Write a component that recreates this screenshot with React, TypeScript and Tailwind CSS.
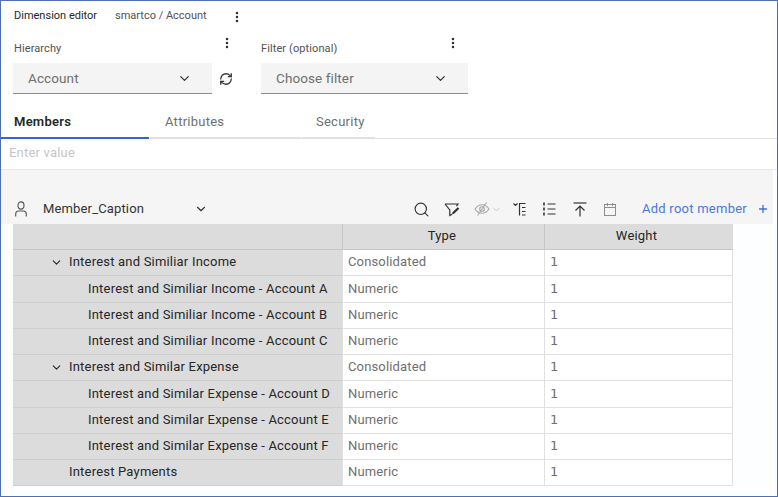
import { ChevronDown, RefreshCw, Search, Plus, MoreVertical } from "lucide-react";

const rows = [
  { name: "Interest and Similiar Income", level: 1, chev: true, type: "Consolidated" },
  { name: "Interest and Similiar Income - Account A", level: 2, type: "Numeric" },
  { name: "Interest and Similiar Income - Account B", level: 2, type: "Numeric" },
  { name: "Interest and Similiar Income - Account C", level: 2, type: "Numeric" },
  { name: "Interest and Similar Expense", level: 1, chev: true, type: "Consolidated" },
  { name: "Interest and Similar Expense - Account D", level: 2, type: "Numeric" },
  { name: "Interest and Similar Expense - Account E", level: 2, type: "Numeric" },
  { name: "Interest and Similar Expense - Account F", level: 2, type: "Numeric" },
  { name: "Interest Payments", level: 1, type: "Numeric" },
];

function Dots() {
  return <MoreVertical size={14} strokeWidth={2.4} className="text-[#333]" />;
}

function Select({ label, width }: { label: string; width: string }) {
  return (
    <div className={`${width} h-[31px] bg-[#f4f4f4] border-b border-[#8d8d8d] flex items-center justify-between pl-[15px] pr-[20px]`}>
      <span className="text-[13.5px] tracking-[0.1px] text-[#6f6f6f]">{label}</span>
      <ChevronDown size={15} className="text-[#333]" />
    </div>
  );
}

function UserIcon() {
  return (
    <svg width="12" height="16" viewBox="0 0 12 16" fill="none" stroke="#525252" strokeWidth="1.1">
      <ellipse cx="6" cy="4.500" rx="3" ry="3.600" />
      <path d="M0.700 15.500v-2.500c0-1.800 1.200-3 3-3h4.600c1.800 0 3 1.200 3 3v2.500" />
    </svg>
  );
}

function FilterEdit() {
  return (
    <svg width="16" height="15" viewBox="0 0 16 15" fill="none" stroke="#333" strokeWidth="1.2">
      <path d="M1 2h13l-1.500 2.200M1 2l4.800 6v5.500l2.400-1.200" />
      <path d="M8.500 10.200l5.200-5 1.600 1.500-5.200 5-2 .5z" fill="#333" stroke="none" />
    </svg>
  );
}

function EyeCrossed() {
  return (
    <svg width="16" height="16" viewBox="0 0 16 16" fill="none" stroke="#a8a8a8" strokeWidth="1.1">
      <path d="M1 8c2-3 4.300-4.300 7-4.300S13 5 15 8c-2 3-4.300 4.300-7 4.300S3 11 1 8z" />
      <circle cx="8" cy="8" r="2.300" />
      <path d="M12.500 1.500L3.500 14.500" />
    </svg>
  );
}

function TreeIcon() {
  return (
    <svg width="14" height="14" viewBox="0 0 14 14" fill="none" stroke="#333" strokeWidth="1.2">
      <path d="M0.500 1.500L2.500 3.500L4.500 1.500" />
      <path d="M6.500 1v12.500" />
      <path d="M6.500 1.500h6M9 5.500h3.500M9 9.500h3.500M9 13h3.500" />
    </svg>
  );
}

function ListIcon() {
  return (
    <svg width="13" height="14" viewBox="0 0 13 14" fill="none" stroke="#333" strokeWidth="1.2">
      <path d="M1 0.500v3M1 5.500v3M1 10.500v3" strokeWidth="1.600" />
      <path d="M4.500 2h8M4.500 7h8M4.500 12h8" />
    </svg>
  );
}

function TopArrow() {
  return (
    <svg width="14" height="15" viewBox="0 0 14 15" fill="none" stroke="#333" strokeWidth="1.2">
      <path d="M0.500 1h13" />
      <path d="M7 14.500V4M2.500 8.500L7 4l4.500 4.500" />
    </svg>
  );
}

function CalendarIcon() {
  return (
    <svg width="12" height="13" viewBox="0 0 12 13" fill="none" stroke="#8d8d8d" strokeWidth="1">
      <rect x="0.500" y="1.500" width="11" height="11" />
      <path d="M0.500 4.500h11M3.500 0v3M8.500 0v3" />
    </svg>
  );
}

export default function App() {
  return (
    <div className="w-[778px] h-[497px] overflow-hidden bg-white border border-[#4f70b0] flex flex-col font-['Roboto',sans-serif]">
      <div className="flex items-center h-[30px] pl-[13px] pt-[1px] text-[11px]">
        <span className="text-[#262626] w-[101px]">Dimension editor</span>
        <span className="text-[#525252] w-[115px]">smartco / Account</span>
        <Dots />
      </div>
      <div className="flex pl-[12px] h-[65px]">
        <div className="flex flex-col w-[248px]">
          <div className="flex justify-between h-[32px] pr-[27px] pl-[1px]">
            <span className="text-[11px] text-[#525252] mt-[10px] tracking-[0.1px]">Hierarchy</span>
            <span className="mt-[5px]"><Dots /></span>
          </div>
          <div className="flex items-center gap-[7px]">
            <Select label="Account" width="w-[199px]" />
            <RefreshCw size={14} strokeWidth={2.2} className="text-[#333]" />
          </div>
        </div>
        <div className="flex flex-col w-[207px]">
          <div className="flex justify-between h-[32px] pr-[8px]">
            <span className="text-[11px] text-[#525252] mt-[10px] tracking-[0.1px]">Filter (optional)</span>
            <span className="mt-[5px]"><Dots /></span>
          </div>
          <Select label="Choose filter" width="w-[207px]" />
        </div>
      </div>
      <div className="flex h-[43px] items-stretch border-b border-[#e0e0e0] tracking-[0.25px]">
        <div className="w-[148px] border-b-2 border-[#2f66d0] -mb-px flex items-end pb-[6px] pl-[13px] text-[13px] font-semibold text-[#262626]">Members</div>
        <div className="w-[151px] ml-[1px] border-b-2 border-[#e0e0e0] -mb-px flex items-end pb-[6px] pl-[15px] text-[13px] text-[#6f6f6f]">Attributes</div>
        <div className="w-[73px] ml-[1px] border-b-2 border-[#e0e0e0] -mb-px flex items-end pb-[6px] pl-[14px] text-[13px] text-[#6f6f6f]">Security</div>
      </div>
      <div className="h-[31px] flex items-center pb-[2px] pl-[8px] text-[13px] tracking-[0.2px] text-[#c6c6c6] border-b border-[#e8e8e8]">Enter value</div>
      <div className="h-[54px] w-[772px] bg-[#f5f5f5] flex items-end">
        <div className="h-[29px] w-full flex items-center pl-[14px] pb-[1px]">
          <UserIcon />
          <span className="ml-[16px] text-[13px] tracking-[0.15px] text-[#333] w-[151px]">Member_Caption</span>
          <ChevronDown size={14} className="text-[#333]" />
          <div className="flex items-center ml-[205px] text-[#333]">
            <Search size={17} strokeWidth={1.6} />
            <span className="ml-[14px]"><FilterEdit /></span>
            <span className="ml-[14px]"><EyeCrossed /></span>
            <ChevronDown size={11} className="text-[#c6c6c6] ml-[1px]" />
            <span className="ml-[11px]"><TreeIcon /></span>
            <span className="ml-[16px]"><ListIcon /></span>
            <span className="ml-[17px]"><TopArrow /></span>
            <span className="ml-[17px]"><CalendarIcon /></span>
            <span className="ml-[26px] text-[13px] tracking-[0.25px] text-[#4a78e0]">Add root member</span>
            <Plus size={12} strokeWidth={2.6} className="ml-[10px] text-[#3f6fe0]" />
          </div>
        </div>
      </div>
      <div className="flex-1 bg-[#fdfeff]">
        <div className="w-[720px] ml-[12px] text-[13px] tracking-[0.2px]">
          <div className="flex h-[26px] bg-[#dcdcdc] border-b border-[#c6c6c6]">
            <div className="w-[329px]" />
            <div className="w-[202px] border-l border-[#c6c6c6] flex items-center justify-center pr-[3px] pb-[2px] text-[#262626]">Type</div>
            <div className="flex-1 border-l border-[#c6c6c6] flex items-center justify-center pr-[5px] pb-[2px] text-[#262626]">Weight</div>
          </div>
          {rows.map((r) => (
            <div key={r.name} className="flex h-[26.25px]">
              <div className="w-[329px] bg-[#dcdcdc] border-b border-[#cfcfcf] flex items-center pb-[1px] text-[#262626]">
                {r.chev ? (
                  <ChevronDown size={13} className="ml-[37px] mr-[6px]" />
                ) : r.level === 1 ? (
                  <span className="ml-[56px]" />
                ) : (
                  <span className="ml-[75px]" />
                )}
                {r.name}
              </div>
              <div className="w-[202px] bg-white border-b border-l border-[#e0e0e0] flex items-center pb-[1px] pl-[5px] tracking-[0.15px] text-[#6f6f6f]">{r.type}</div>
              <div className="flex-1 bg-white border-b border-l border-r border-[#e0e0e0] flex items-center pb-[1px] pl-[5px] font-['DejaVu_Sans',sans-serif] text-[#6f6f6f]">1</div>
            </div>
          ))}
        </div>
      </div>
    </div>
  );
}
